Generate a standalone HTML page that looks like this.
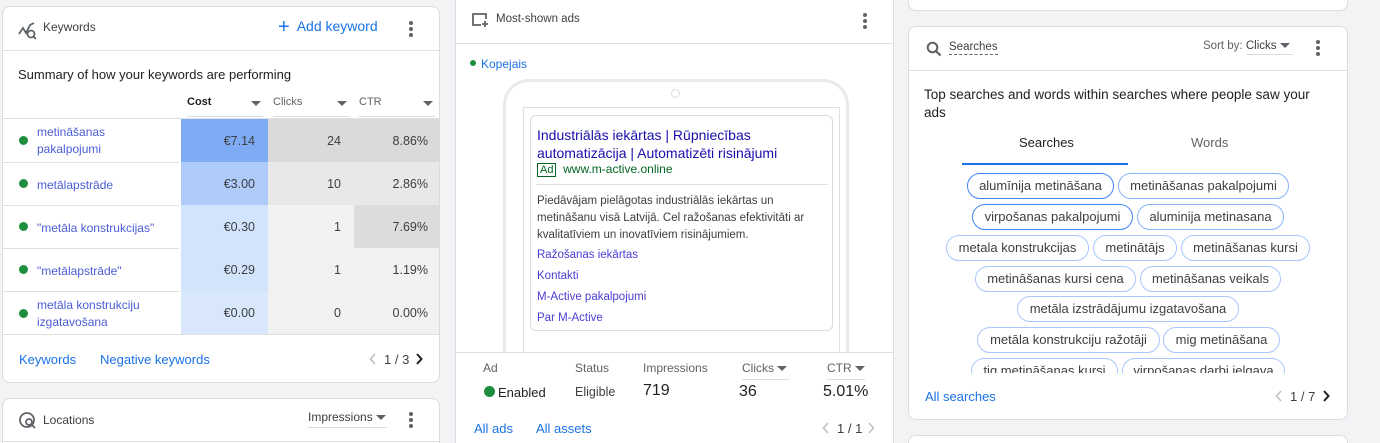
<!DOCTYPE html>
<html><head><meta charset="utf-8"><style>
*{box-sizing:border-box;margin:0;padding:0}
html{width:1380px;height:443px;overflow:hidden}
body{width:1380px;height:443px;background:#f1f3f4;font-family:"Liberation Sans",Arial,sans-serif;position:relative;overflow:hidden;color:#202124;font-size:13px}
.a{position:absolute}
.card{position:absolute;background:#fff;border:1px solid #dadce0;border-radius:8px;overflow:hidden}
.hl{position:absolute;left:0;right:0;height:1px;background:#e0e0e0}
.link{color:#1a73e8}
.kw{color:#4a5dd6;font-size:12px;line-height:17px}
.dot{position:absolute;width:9px;height:9px;border-radius:50%;background:#1e8e3e}
.cell{position:absolute;text-align:right;font-size:12.5px;color:#3c4043}
.chip{position:absolute;height:26px;border:1px solid #a8c7fa;border-radius:13px;font-size:13px;color:#3c4043;text-align:center;line-height:24px;white-space:nowrap}
.menu{position:absolute;width:4px}
.menu i{display:block;width:4px;height:4px;border-radius:2px;background:#5f6368;margin-bottom:2px}
.tri{display:inline-block;width:0;height:0;border-left:5px solid transparent;border-right:5px solid transparent;border-top:5px solid #5f6368;vertical-align:middle}
</style></head><body>

<div class="card" style="left:2px;top:6px;width:438px;height:377px">
 <svg class="a" style="left:15px;top:15px" width="20" height="18" viewBox="0 0 20 18"><path d="M1 12 L5 6 L8 11 L12 3 L16 1" fill="none" stroke="#5f6368" stroke-width="1.8"/><circle cx="13" cy="12" r="3.5" fill="none" stroke="#5f6368" stroke-width="1.8"/><path d="M15.5 14.5 L18 17" stroke="#5f6368" stroke-width="1.8"/></svg>
 <div class="a" style="left:40px;top:13px;font-size:12px;color:#3c4043">Keywords</div>
 <div class="a link" style="left:275px;top:11px;font-size:14px"><span style="font-size:20px;line-height:14px;vertical-align:-2px">+</span>&nbsp; Add keyword</div>
 <div class="menu" style="left:406px;top:14px"><i></i><i></i><i></i></div>
 <div class="hl" style="top:43px"></div>
 <div class="a" style="left:15px;top:60px;font-size:13px;color:#202124">Summary of how your keywords are performing</div>
 <div class="a" style="left:184px;top:89px;width:76px;border-bottom:1px solid #dadce0;height:21px;font-size:11px;font-weight:bold">Cost<span class="tri" style="position:absolute;right:2px;top:5px"></span></div>
 <div class="a" style="left:270px;top:89px;width:76px;border-bottom:1px solid #dadce0;height:21px;font-size:11px;color:#5f6368">Clicks<span class="tri" style="position:absolute;right:2px;top:5px"></span></div>
 <div class="a" style="left:356px;top:89px;width:76px;border-bottom:1px solid #dadce0;height:21px;font-size:11px;color:#5f6368">CTR<span class="tri" style="position:absolute;right:2px;top:5px"></span></div>
 <div class="hl" style="top:111px"></div>
 <div class="a" style="left:178px;top:112px;width:87px;height:43px;background:#7eabf4"></div>
 <div class="a" style="left:265px;top:112px;width:173px;height:43px;background:#dadada"></div>
 <div class="a" style="left:178px;top:155px;width:87px;height:43px;background:#aecbfa"></div>
 <div class="a" style="left:265px;top:155px;width:173px;height:43px;background:#e8e8e8"></div>
 <div class="a" style="left:178px;top:198px;width:87px;height:86px;background:#d2e3fc"></div>
 <div class="a" style="left:178px;top:284px;width:87px;height:43px;background:#d9e7fd"></div>
 <div class="a" style="left:265px;top:198px;width:86px;height:129px;background:#f1f1f1"></div>
 <div class="a" style="left:351px;top:198px;width:87px;height:43px;background:#dcdcdc"></div>
 <div class="a" style="left:351px;top:241px;width:87px;height:86px;background:#f1f1f1"></div>
 <div class="hl" style="top:155px;right:260px"></div>
 <div class="hl" style="top:198px;right:260px"></div>
 <div class="hl" style="top:241px;right:260px"></div>
 <div class="hl" style="top:284px;right:260px"></div>
 <div class="hl" style="top:327px"></div>

 <div class="dot" style="left:16px;top:129px"></div><div class="a kw" style="left:34px;top:117px">metinā&#353;anas<br>pakalpojumi</div>
 <div class="cell" style="left:180px;top:127px;width:72px">€7.14</div><div class="cell" style="left:270px;top:127px;width:68px">24</div><div class="cell" style="left:350px;top:127px;width:75px">8.86%</div>
 <div class="dot" style="left:16px;top:172px"></div><div class="a kw" style="left:34px;top:170px">metālapstrāde</div>
 <div class="cell" style="left:180px;top:170px;width:72px">€3.00</div><div class="cell" style="left:270px;top:170px;width:68px">10</div><div class="cell" style="left:350px;top:170px;width:75px">2.86%</div>
 <div class="dot" style="left:16px;top:215px"></div><div class="a kw" style="left:34px;top:213px">"metāla konstrukcijas"</div>
 <div class="cell" style="left:180px;top:213px;width:72px">€0.30</div><div class="cell" style="left:270px;top:213px;width:68px">1</div><div class="cell" style="left:350px;top:213px;width:75px">7.69%</div>
 <div class="dot" style="left:16px;top:258px"></div><div class="a kw" style="left:34px;top:256px">"metālapstrāde"</div>
 <div class="cell" style="left:180px;top:256px;width:72px">€0.29</div><div class="cell" style="left:270px;top:256px;width:68px">1</div><div class="cell" style="left:350px;top:256px;width:75px">1.19%</div>
 <div class="dot" style="left:16px;top:302px"></div><div class="a kw" style="left:34px;top:290px">metāla konstrukciju<br>izgatavo&#353;ana</div>
 <div class="cell" style="left:180px;top:299px;width:72px">€0.00</div><div class="cell" style="left:270px;top:299px;width:68px">0</div><div class="cell" style="left:350px;top:299px;width:75px">0.00%</div>

 <div class="a link" style="left:16px;top:345px">Keywords</div>
 <div class="a link" style="left:97px;top:345px">Negative keywords</div>
 <svg class="a" style="left:366px;top:346px" width="8" height="12" viewBox="0 0 8 12"><path d="M6 1 L1.5 6 L6 11" fill="none" stroke="#bdc1c6" stroke-width="1.6"/></svg>
 <div class="a" style="left:381px;top:345px;color:#3c4043">1 / 3</div>
 <svg class="a" style="left:412px;top:346px" width="8" height="12" viewBox="0 0 8 12"><path d="M2 1 L6.5 6 L2 11" fill="none" stroke="#202124" stroke-width="2"/></svg>
</div>

<div class="card" style="left:2px;top:398px;width:438px;height:46px;border-bottom-left-radius:0;border-bottom-right-radius:0">
 <svg class="a" style="left:15px;top:12px" width="20" height="20" viewBox="0 0 20 20"><circle cx="9" cy="9" r="7" fill="none" stroke="#5f6368" stroke-width="1.8"/><circle cx="11" cy="11" r="3" fill="none" stroke="#5f6368" stroke-width="1.8"/><path d="M13 13 L17 17" stroke="#5f6368" stroke-width="1.8"/></svg>
 <div class="a" style="left:40px;top:14px;font-size:12px;color:#3c4043">Locations</div>
 <div class="a" style="left:305px;top:11px;font-size:12px;color:#3c4043;border-bottom:1px solid #dadce0;width:79px;padding-bottom:3px;white-space:nowrap">Impressions <span class="tri"></span></div>
 <div class="menu" style="left:406px;top:13px"><i></i><i></i><i></i></div>
 <div class="hl" style="top:42px"></div>
</div>

<div class="card" style="left:455px;top:-8px;width:439px;height:452px;border-bottom-left-radius:0;border-bottom-right-radius:0">
 <svg class="a" style="left:15px;top:19px" width="18" height="15" viewBox="0 0 18 15"><path d="M10 13 H2 V2 H15 V7" fill="none" stroke="#5f6368" stroke-width="1.8"/><path d="M14 9 V15 M11 12 H17" stroke="#5f6368" stroke-width="1.8"/></svg>
 <div class="a" style="left:40px;top:20px;font-size:11.5px;color:#3c4043">Most-shown ads</div>
 <div class="menu" style="left:407px;top:20px"><i></i><i></i><i></i></div>
 <div class="hl" style="top:50px"></div>
 <div class="a" style="left:14px;top:67px;width:6px;height:6px;border-radius:3px;background:#1e8e3e"></div>
 <div class="a" style="left:25px;top:64px;font-size:12px;color:#1a73e8">Kopejais</div>
 <div class="a" style="left:47px;top:86px;width:346px;height:290px;border:3px solid #e8eaed;border-bottom:none;border-radius:26px 26px 0 0"></div>
 <div class="a" style="left:215px;top:96px;width:9px;height:9px;border:1px solid #dadce0;border-radius:50%"></div>
 <div class="a" style="left:67px;top:114px;width:317px;height:260px;border:1px solid #e0e0e0;border-bottom:none"></div>
 <div class="a" style="left:74px;top:122px;width:303px;height:216px;border:1px solid #dadce0;border-radius:6px"></div>
 <div class="a" style="left:80px;top:191px;width:292px;height:1px;background:#e0e0e0"></div>
 <div class="a" style="left:81px;top:133px;font-size:14px;line-height:18px;color:#1a0dab">Industriālās iekārtas | Rūpniecības<br>automatizācija | Automatizēti risinājumi</div>
 <div class="a" style="left:81px;top:169px;font-size:12px;color:#006621"><span style="border:1px solid #006621;padding:0 2px;font-size:11px">Ad</span>&nbsp; www.m-active.online</div>
 <div class="a" style="left:81px;top:200px;font-size:11.5px;line-height:17px;color:#3c4043">Piedāvājam pielāgotas industriālās iekārtas un<br>metinā&#353;anu visā Latvijā. Cel ra&#382;o&#353;anas efektivitāti ar<br>kvalitatīviem un inovatīviem risinājumiem.</div>
 <div class="a" style="left:81px;top:252px;font-size:11.5px;color:#4a3dd6;line-height:21px">Ra&#382;o&#353;anas iekārtas<br>Kontakti<br>M-Active pakalpojumi<br>Par M-Active</div>
 <div class="a" style="left:0;top:359px;width:439px;height:100px;background:#fff;border-top:1px solid #e0e0e0"></div>
 <div class="a" style="left:27px;top:368px;font-size:12px;color:#5f6368">Ad</div>
 <div class="a" style="left:119px;top:368px;font-size:12px;color:#5f6368">Status</div>
 <div class="a" style="left:187px;top:368px;font-size:12px;color:#5f6368">Impressions</div>
 <div class="a" style="left:286px;top:368px;font-size:12px;color:#5f6368;border-bottom:1px solid #dadce0;width:47px;padding-bottom:4px;white-space:nowrap">Clicks <span class="tri"></span></div>
 <div class="a" style="left:371px;top:368px;font-size:12px;color:#5f6368;border-bottom:1px solid #dadce0;width:38px;padding-bottom:4px;white-space:nowrap">CTR <span class="tri"></span></div>
 <div class="a" style="left:28px;top:393px;width:11px;height:11px;border-radius:50%;background:#1e8e3e"></div>
 <div class="a" style="left:42px;top:392px;font-size:13px">Enabled</div>
 <div class="a" style="left:119px;top:392px;font-size:12.5px;color:#3c4043">Eligible</div>
 <div class="a" style="left:187px;top:389px;font-size:16px">719</div>
 <div class="a" style="left:283px;top:390px;font-size:16px">36</div>
 <div class="a" style="left:367px;top:390px;font-size:16px">5.01%</div>
 <div class="a link" style="left:18px;top:428px">All ads</div>
 <div class="a link" style="left:80px;top:428px">All assets</div>
 <svg class="a" style="left:366px;top:429px" width="8" height="12" viewBox="0 0 8 12"><path d="M6 1 L1.5 6 L6 11" fill="none" stroke="#bdc1c6" stroke-width="1.6"/></svg>
 <div class="a" style="left:381px;top:428px;color:#3c4043">1 / 1</div>
 <svg class="a" style="left:411px;top:429px" width="8" height="12" viewBox="0 0 8 12"><path d="M2 1 L6.5 6 L2 11" fill="none" stroke="#bdc1c6" stroke-width="1.6"/></svg>
</div>

<div class="card" style="left:908px;top:-20px;width:440px;height:31px"></div>

<div class="card" style="left:908px;top:26px;width:440px;height:394px">
 <svg class="a" style="left:17px;top:14px" width="16" height="16" viewBox="0 0 16 16"><circle cx="6.5" cy="6.5" r="4.8" fill="none" stroke="#5f6368" stroke-width="2"/><path d="M10 10 L14.5 14.5" stroke="#5f6368" stroke-width="2.2"/></svg>
 <div class="a" style="left:40px;top:14px;font-size:11.5px;color:#3c4043;border-bottom:1px dashed #5f6368;line-height:13px">Searches</div>
 <div class="a" style="left:294px;top:13px;font-size:11.5px;color:#5f6368;white-space:nowrap">Sort by: <span style="color:#3c4043;border-bottom:1px solid #dadce0;display:inline-block;width:47px;padding-bottom:2px">Clicks <span class="tri"></span></span></div>
 <div class="menu" style="left:407px;top:13px"><i></i><i></i><i></i></div>
 <div class="hl" style="top:43px"></div>
 <div class="a" style="left:15px;top:59px;font-size:13.5px;line-height:18px;width:392px">Top searches and words within searches where people saw your ads</div>
 <div class="a" style="left:110px;top:108px;font-size:13px;color:#202124">Searches</div>
 <div class="a" style="left:282px;top:108px;font-size:13px;color:#5f6368">Words</div>
 <div class="a" style="left:53px;top:136px;width:166px;height:2px;background:#1a73e8"></div>
 <div class="a" style="left:0;top:138px;width:440px;height:208px;overflow:hidden">
  <div class="chip" style="left:58px;top:8px;width:147px;border-color:#4285f4">alumīnija metinā&#353;ana</div>
  <div class="chip" style="left:209px;top:8px;width:171px;border-color:#8ab4f8">metinā&#353;anas pakalpojumi</div>
  <div class="chip" style="left:63px;top:39px;width:161px;border-color:#4285f4">virpo&#353;anas pakalpojumi</div>
  <div class="chip" style="left:228px;top:39px;width:147px;border-color:#8ab4f8">aluminija metinasana</div>
  <div class="chip" style="left:37px;top:70px;width:143px">metala konstrukcijas</div>
  <div class="chip" style="left:184px;top:70px;width:84px">metinātājs</div>
  <div class="chip" style="left:272px;top:70px;width:129px">metinā&#353;anas kursi</div>
  <div class="chip" style="left:66px;top:101px;width:161px">metinā&#353;anas kursi cena</div>
  <div class="chip" style="left:231px;top:101px;width:141px">metinā&#353;anas veikals</div>
  <div class="chip" style="left:108px;top:131px;width:222px">metāla izstrādājumu izgatavo&#353;ana</div>
  <div class="chip" style="left:68px;top:162px;width:183px">metāla konstrukciju ra&#382;otāji</div>
  <div class="chip" style="left:254px;top:162px;width:117px">mig metinā&#353;ana</div>
  <div class="chip" style="left:62px;top:193px;width:147px">tig metinā&#353;anas kursi</div>
  <div class="chip" style="left:213px;top:193px;width:163px">virpo&#353;anas darbi jelgava</div>
 </div>
 <div class="a link" style="left:16px;top:362px">All searches</div>
 <svg class="a" style="left:366px;top:363px" width="8" height="12" viewBox="0 0 8 12"><path d="M6 1 L1.5 6 L6 11" fill="none" stroke="#bdc1c6" stroke-width="1.6"/></svg>
 <div class="a" style="left:381px;top:362px;color:#3c4043">1 / 7</div>
 <svg class="a" style="left:413px;top:363px" width="8" height="12" viewBox="0 0 8 12"><path d="M2 1 L6.5 6 L2 11" fill="none" stroke="#202124" stroke-width="2"/></svg>
</div>

<div class="card" style="left:908px;top:435px;width:440px;height:9px;border-bottom:none;border-bottom-left-radius:0;border-bottom-right-radius:0"></div>
</body></html>
